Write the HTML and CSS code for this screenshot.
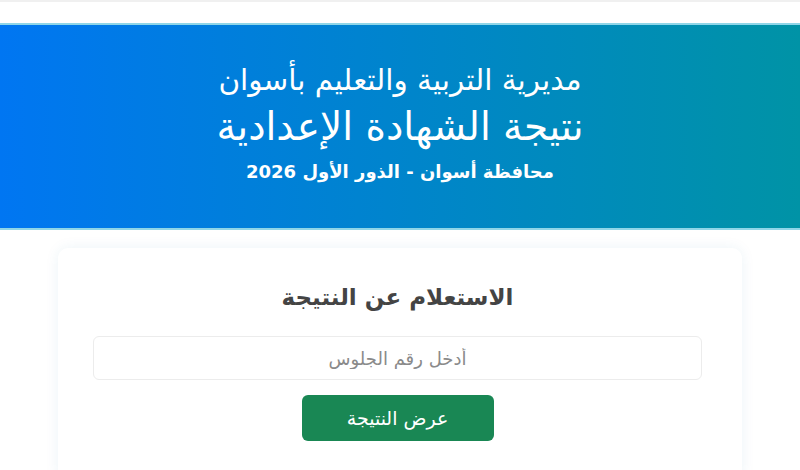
FILE: index.html
```html
<!DOCTYPE html>
<html lang="ar" dir="rtl">

<head>
    <meta charset="UTF-8">
    <meta name="viewport" content="width=device-width, initial-scale=1.0">
    <title>نتيجة الشهادة الإعدادية - أسوان</title>
    <link rel="stylesheet" href="styles.css">
</head>

<body>
    <div class="topBar"></div>
    <header class="banner">
        <h2 class="bannerLine1">مديرية التربية والتعليم بأسوان</h2>
        <h1 class="bannerTitle">نتيجة الشهادة الإعدادية</h1>
        <p class="bannerLine3">محافظة أسوان - الذور الأول 2026</p>
    </header>
    <div class="page">
        <form class="searchCard">
            <h3 class="searchTitle">الاستعلام عن النتيجة</h3>
            <input type="text" class="seatInput" placeholder="أدخل رقم الجلوس">
            <button type="button" class="showButton">عرض النتيجة</button>
        </form>
    </div>
</body>

</html>
```

FILE: styles.css
```css
* {
    margin: 0;
    padding: 0;
    box-sizing: border-box;
}

body {
    font-family: "DejaVu Sans", "Noto Sans", sans-serif;
    background-color: #fff;
    width: 800px;
    height: 470px;
    overflow: hidden;
}

.topBar {
    height: 23px;
    background-color: #fff;
    border-top: 2px solid #f0f0f0;
}

.banner {
    height: 207px;
    background-image: linear-gradient(to right, #0076f2, #0093a6);
    border-top: 2px solid #8fd6e8;
    border-bottom: 2px solid #8fd6e8;
    color: #fff;
    text-align: center;
    padding-top: 38px;
}

.bannerLine1 {
    font-size: 29.5px;
    font-weight: normal;
    line-height: 34px;
}

.bannerTitle {
    font-size: 39px;
    font-weight: normal;
    line-height: 50px;
    margin-top: 5px;
}

.bannerLine3 {
    font-size: 18px;
    font-weight: bold;
    line-height: 24px;
    margin-top: 8px;
}

.page {
    padding: 18px 58px 0;
}

.searchCard {
    background-color: #fff;
    border-radius: 10px;
    box-shadow: 0 0 14px rgba(0, 120, 170, 0.08);
    padding: 34px 40px 40px 35px;
    display: flex;
    flex-direction: column;
    align-items: center;
}

.searchTitle {
    font-size: 23px;
    font-weight: bold;
    color: #444;
    line-height: 30px;
}

.seatInput {
    width: 100%;
    height: 44px;
    margin-top: 24px;
    border: 1px solid #ececec;
    border-radius: 6px;
    text-align: center;
    font-family: inherit;
    font-size: 18px;
    color: #555;
    outline: none;
}

.seatInput::placeholder {
    color: #8a8a8a;
}

.showButton {
    margin-top: 15px;
    width: 192px;
    height: 46px;
    background-color: #198754;
    color: #fff;
    border: 0;
    border-radius: 6px;
    font-family: inherit;
    font-size: 19px;
}
```
